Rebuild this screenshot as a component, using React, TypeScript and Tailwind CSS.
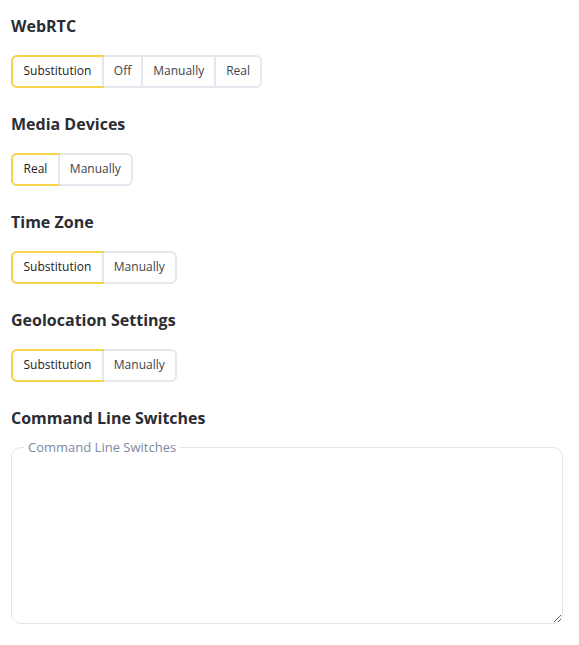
import { useState } from 'react';

type Option = { label: string; value: string };

interface SegmentedProps {
  options: Option[];
  value: string;
  onChange: (value: string) => void;
}

function Segmented({ options, value, onChange }: SegmentedProps) {
  return (
    <div className="mt-[18px] inline-flex h-[33px] rounded-[6px] border-2 border-[#e4e7ed] bg-white">
      {options.map((opt, i) => {
        const active = opt.value === value;
        return (
          <button
            key={opt.value}
            type="button"
            onClick={() => onChange(opt.value)}
            className={
              (active
                ? '-m-[2px] h-[33px] border-2 border-[#f7d54a] px-[10.5px] text-[#1f2126] '
                : 'h-full px-[10px] text-[#40434c] ') +
              (i > 0 && !active ? 'border-l-2 border-[#e4e7ed] ' : '') +
              (i === 0 ? 'rounded-l-[6px] ' : '') +
              (i === options.length - 1 ? 'rounded-r-[6px] ' : '') +
              'pb-px text-[12px] leading-none'
            }
          >
            {opt.label}
          </button>
        );
      })}
    </div>
  );
}

function Section({ title, first, children }: { title: string; first?: boolean; children: React.ReactNode }) {
  return (
    <section className={first ? 'pt-[15px]' : 'pt-[25px]'}>
      <h3 className="text-[16px] font-bold leading-[22px] text-[#2b2d33]">{title}</h3>
      {children}
    </section>
  );
}

export default function App() {
  // selected mode for each fingerprint setting
  const [webrtc, setWebrtc] = useState('substitution');
  const [media, setMedia] = useState('real');
  const [timezone, setTimezone] = useState('substitution');
  const [geo, setGeo] = useState('substitution');

  return (
    <div className="min-h-screen bg-white px-[11px] pb-[20px] font-['Open_Sans',sans-serif]">
      <Section title="WebRTC" first>
        <Segmented
          value={webrtc}
          onChange={setWebrtc}
          options={[
            { label: 'Substitution', value: 'substitution' },
            { label: 'Off', value: 'off' },
            { label: 'Manually', value: 'manually' },
            { label: 'Real', value: 'real' },
          ]}
        />
      </Section>
      <Section title="Media Devices">
        <Segmented
          value={media}
          onChange={setMedia}
          options={[
            { label: 'Real', value: 'real' },
            { label: 'Manually', value: 'manually' },
          ]}
        />
      </Section>
      <Section title="Time Zone">
        <Segmented
          value={timezone}
          onChange={setTimezone}
          options={[
            { label: 'Substitution', value: 'substitution' },
            { label: 'Manually', value: 'manually' },
          ]}
        />
      </Section>
      <Section title="Geolocation Settings">
        <Segmented
          value={geo}
          onChange={setGeo}
          options={[
            { label: 'Substitution', value: 'substitution' },
            { label: 'Manually', value: 'manually' },
          ]}
        />
      </Section>
      <Section title="Command Line Switches">
        <fieldset className="mt-[10px] w-[552px] rounded-[10px] border border-[#e3e5eb] p-0">
          <legend className="ml-[12px] px-[4px] text-[13px] leading-[16px] text-[#7d89a0]">
            Command Line Switches
          </legend>
          <textarea className="block h-[168px] w-full resize rounded-b-[10px] bg-transparent outline-none" />
        </fieldset>
      </Section>
    </div>
  );
}
